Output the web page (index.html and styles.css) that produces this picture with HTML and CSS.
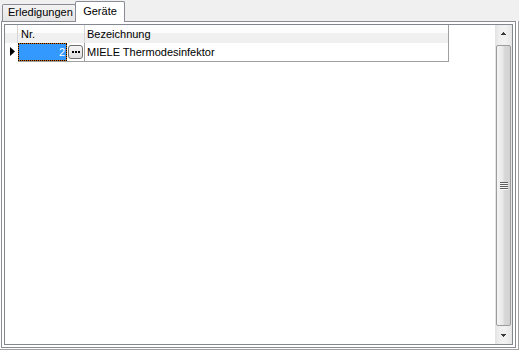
FILE: index.html
```html
<!DOCTYPE html>
<html lang="de">
<head>
<meta charset="utf-8">
<title>Geräte</title>
<link rel="stylesheet" href="styles.css">
</head>
<body>
<div class="tabs">
  <div class="tab first">Erledigungen</div>
  <div class="tab active">Geräte</div>
</div>
<div class="page">
  <div class="frame">
    <div class="grid">
      <div class="table">
        <div class="hdr">
          <div class="rh"></div>
          <div class="hc c-nr">Nr.</div>
          <div class="hc c-bez">Bezeichnung</div>
        </div>
        <div class="row">
          <div class="rh"><svg class="tri" width="5" height="9" viewBox="0 0 5 9"><path d="M0 0L5 4.5L0 9Z"/></svg></div>
          <div class="cell c-nr">
            <span class="sel">2</span>
            <span class="ell"><i></i><i></i><i></i></span>
          </div>
          <div class="cell c-bez">MIELE Thermodesinfektor</div>
        </div>
      </div>
      <div class="vscroll">
        <div class="sbtn"><svg width="5" height="3" viewBox="0 0 5 3"><path d="M2 0H3V1H4V2H5V3H0V2H1V1H2Z"/></svg></div>
        <div class="thumb"><div class="grip"></div></div>
        <div class="sbtn"><svg width="5" height="3" viewBox="0 0 5 3"><path d="M0 0H5V1H4V2H3V3H2V2H1V1H0Z"/></svg></div>
      </div>
    </div>
  </div>
</div>
</body>
</html>
```
FILE: styles.css
```css
* { box-sizing: border-box; }
html, body { margin: 0; padding: 0; }
body {
  width: 519px;
  height: 350px;
  background: #f0f0f0;
  font-family: "Liberation Sans", Arial, sans-serif;
  font-size: 11px;
  color: #000;
  overflow: hidden;
}

/* tab strip */
.tabs {
  height: 21px;
  display: flex;
  align-items: flex-end;
  padding-left: 2px;
}
.tab {
  width: 74px;
  height: 17px;
  border: 1px solid #898c95;
  border-bottom: 0;
  border-radius: 2px 2px 0 0;
  background: linear-gradient(#f3f3f3, #e5e5e5);
  line-height: 15px;
  text-align: center;
  white-space: nowrap;
}
.tab.first {
  text-align: left;
  padding-left: 5px;
}
.tab.active {
  width: 50px;
  height: 21px;
  margin-left: -1px;
  margin-bottom: -1px;
  padding-top: 2px;
  line-height: 14px;
  background: #fff;
  position: relative;
  z-index: 1;
}

/* tab page */
.page {
  width: 519px;
  height: 329px;
  padding-left: 1px;
  background: #fff;
  border-right: 1px solid #a0a0a0;
  border-bottom: 1px solid #a0a0a0;
}
.frame {
  width: 515px;
  height: 327px;
  border: 1px solid #898c95;
  padding: 2px;
  background: #fff;
}
.grid {
  width: 509px;
  height: 321px;
  border: 1px solid #828790;
  background: #fff;
  display: flex;
}
.table {
  flex: 1;
  display: flex;
  flex-direction: column;
}

/* header */
.hdr {
  display: flex;
  height: 18px;
}
.hdr .rh,
.hc {
  height: 18px;
  background: linear-gradient(#fdfdfd 0, #fdfdfd 45%, #f0f0f0 45%, #f0f0f0 100%);
  border-right: 1px solid #d5d5d5;
  line-height: 18px;
  white-space: nowrap;
}
.rh { width: 13px; }
.c-nr { width: 67px; }
.c-bez { width: 364px; }
.hc.c-nr { padding-left: 3px; }
.hc.c-bez { padding-left: 2px; border-right-color: #a0a0a0; }

/* data row */
.row {
  display: flex;
  height: 19px;
}
.row .rh {
  padding: 4px 0 0 5px;
}
.tri { display: block; fill: #000; }
.cell {
  height: 19px;
  border-right: 1px solid #a0a0a0;
  border-bottom: 1px solid #a0a0a0;
  white-space: nowrap;
}
.cell.c-nr {
  display: flex;
  align-items: flex-start;
}
.cell.c-bez {
  padding: 1px 0 0 2px;
  line-height: 17px;
}
.sel {
  width: 49px;
  height: 18px;
  border: 1px dotted #000;
  background-color: #d06a00;
  box-shadow: inset 0 0 0 40px #3399ff;
  color: #fff;
  text-align: right;
  padding-right: 1px;
  line-height: 16px;
}
.ell {
  width: 15px;
  height: 14px;
  margin: 2px 0 0 1px;
  border: 1px solid #707070;
  border-radius: 3px;
  background: linear-gradient(#f6f6f6, #dedede);
  display: flex;
  align-items: center;
  justify-content: center;
  gap: 1px;
}
.ell i {
  width: 2px;
  height: 2px;
  background: #000;
}

/* vertical scrollbar */
.vscroll {
  width: 17px;
  display: flex;
  flex-direction: column;
  background: linear-gradient(90deg, #e2e2e2, #efefef 25%, #f2f2f2 60%, #e6e6e6);
}
.sbtn {
  height: 17px;
  display: flex;
  align-items: center;
  justify-content: center;
  flex: none;
}
.sbtn svg { display: block; fill: #3c3c3c; }
.thumb {
  flex: 1;
  margin: 3px 1px 1px 1px;
  border: 1px solid #9c9c9c;
  border-radius: 2px;
  background: linear-gradient(90deg, #f4f4f4 0, #e9e9e9 45%, #d9d9d9 55%, #d2d2d2 100%);
  display: flex;
  align-items: center;
  justify-content: center;
}
.grip {
  width: 8px;
  height: 8px;
  background: repeating-linear-gradient(#5e5e5e 0, #5e5e5e 1px, #f6f6f6 1px, #f6f6f6 2px);
}
```
